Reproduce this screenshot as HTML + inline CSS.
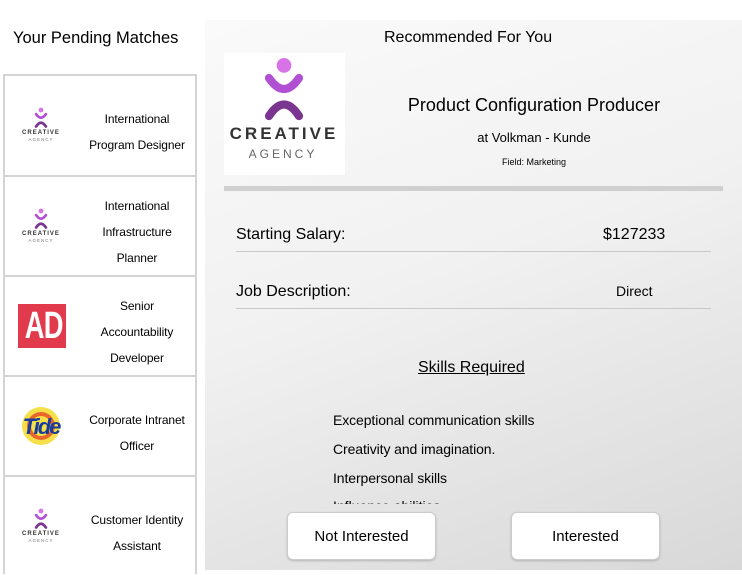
<!DOCTYPE html>
<html><head><style>
*{margin:0;padding:0;box-sizing:border-box}
body{width:742px;height:570px;overflow:hidden;background:#fff;font-family:"Liberation Sans",sans-serif;color:#000;position:relative}
.abs{position:absolute}
.h{font-size:16px}
.list{left:3px;top:74px;width:194px;height:500px;border-left:2px solid #d4d4d4;border-right:2px solid #d4d4d4}
.row{position:absolute;left:0;width:190px;height:100px;border-top:2px solid #d4d4d4}
.row .t{position:absolute;left:76px;width:112px;text-align:center;font-size:12px;line-height:26px;letter-spacing:-0.1px}
.panel{left:205px;top:20px;width:537px;height:550px;background:linear-gradient(160deg,#fafafa 0%,#f1f1f1 45%,#d8d8d8 100%)}
.btn{position:absolute;top:512px;width:149px;height:48px;background:#fff;border:1px solid #ccc;border-radius:6px;box-shadow:0 1px 2px rgba(0,0,0,.2);font-size:15px;text-align:center;line-height:48px}
.sk{position:absolute;left:333px;font-size:14px;letter-spacing:-0.1px}
</style></head><body>
<div class="abs h" style="left:13px;top:29px;font-size:16.5px">Your Pending Matches</div>
<div class="abs panel"></div>
<div class="abs h" style="left:384px;top:29px">Recommended For You</div>

<svg width="0" height="0" style="position:absolute"><defs>
<g id="ca">
<circle cx="0" cy="-12" r="3.2" fill="#d873e8"/>
<path d="M-6.5,-6.5 Q0,3 6.5,-6.5" stroke="#b250d4" stroke-width="3.6" fill="none" stroke-linecap="round"/>
<path d="M-6.5,10 Q0,0 6.5,10" stroke="#7a3590" stroke-width="3.6" fill="none" stroke-linecap="round"/>
</g></defs></svg>

<div class="abs list">
 <div class="row" style="top:0">
  <svg class="abs" style="left:15px;top:28px" width="44" height="42"><use href="#ca" transform="translate(21,15) scale(0.75)"/><text x="21" y="30" font-size="6" font-weight="bold" text-anchor="middle" fill="#333" letter-spacing="1" font-family="Liberation Sans">CREATIVE</text><text x="21" y="37" font-size="4.5" text-anchor="middle" fill="#777" letter-spacing="1" font-family="Liberation Sans">AGENCY</text></svg>
  <div class="t" style="top:30px">International<br>Program Designer</div></div>
 <div class="row" style="top:101px">
  <svg class="abs" style="left:15px;top:28px" width="44" height="42"><use href="#ca" transform="translate(21,15) scale(0.75)"/><text x="21" y="30" font-size="6" font-weight="bold" text-anchor="middle" fill="#333" letter-spacing="1" font-family="Liberation Sans">CREATIVE</text><text x="21" y="37" font-size="4.5" text-anchor="middle" fill="#777" letter-spacing="1" font-family="Liberation Sans">AGENCY</text></svg>
  <div class="t" style="top:16px">International<br>Infrastructure<br>Planner</div></div>
 <div class="row" style="top:201px">
  <div class="abs" style="left:13px;top:27px;width:48px;height:44px;background:#e23a4d;overflow:hidden"><div style="color:#fff;font-weight:bold;font-size:38px;line-height:44px;text-align:center;transform:scaleX(0.72);letter-spacing:-1px">AD</div></div>
  <div class="t" style="top:16px">Senior<br>Accountability<br>Developer</div></div>
 <div class="row" style="top:301px">
  <svg class="abs" style="left:15px;top:28px" width="42" height="42"><circle cx="21" cy="21" r="19" fill="#f6e04a"/><circle cx="21" cy="21" r="14" fill="#e8662c"/><circle cx="21" cy="21" r="10" fill="#f6e04a"/><text x="21" y="29" font-size="22" font-weight="bold" font-style="italic" text-anchor="middle" fill="#1a3c9a" font-family="Liberation Sans" letter-spacing="-2">Tide</text></svg>
  <div class="t" style="top:30px">Corporate Intranet<br>Officer</div></div>
 <div class="row" style="top:401px">
  <svg class="abs" style="left:15px;top:28px" width="44" height="42"><use href="#ca" transform="translate(21,15) scale(0.75)"/><text x="21" y="30" font-size="6" font-weight="bold" text-anchor="middle" fill="#333" letter-spacing="1" font-family="Liberation Sans">CREATIVE</text><text x="21" y="37" font-size="4.5" text-anchor="middle" fill="#777" letter-spacing="1" font-family="Liberation Sans">AGENCY</text></svg>
  <div class="t" style="top:30px">Customer Identity<br>Assistant</div></div>
</div>

<div class="abs" style="left:224px;top:53px;width:121px;height:122px;background:#fff"></div>
<svg class="abs" style="left:224px;top:53px" width="121" height="122"><use href="#ca" transform="translate(60,40) scale(2.3)"/><text x="60" y="86" font-size="17" font-weight="bold" text-anchor="middle" fill="#333" letter-spacing="3" font-family="Liberation Sans">CREATIVE</text><text x="59" y="105" font-size="12" text-anchor="middle" fill="#666" letter-spacing="3" font-family="Liberation Sans">AGENCY</text></svg>

<div class="abs" style="left:345px;top:95px;width:378px;text-align:center;font-size:18px">Product Configuration Producer</div>
<div class="abs" style="left:345px;top:130px;width:378px;text-align:center;font-size:13px">at Volkman - Kunde</div>
<div class="abs" style="left:345px;top:157px;width:378px;text-align:center;font-size:9px">Field: Marketing</div>
<div class="abs" style="left:224px;top:186px;width:499px;height:5px;background:#d0d0d0"></div>

<div class="abs" style="left:236px;top:226px;font-size:16px">Starting Salary:</div>
<div class="abs" style="left:603px;top:226px;font-size:16px">$127233</div>
<div class="abs" style="left:236px;top:251px;width:475px;height:1px;background:#c8c8c8"></div>
<div class="abs" style="left:236px;top:283px;font-size:16px">Job Description:</div>
<div class="abs" style="left:616px;top:283px;font-size:14px">Direct</div>
<div class="abs" style="left:236px;top:308px;width:475px;height:1px;background:#c8c8c8"></div>

<div class="abs" style="left:418px;top:359px;font-size:16px;text-decoration:underline">Skills Required</div>
<div class="sk" style="top:412px">Exceptional communication skills</div>
<div class="sk" style="top:441px">Creativity and imagination.</div>
<div class="sk" style="top:470px">Interpersonal skills</div>
<div class="abs" style="left:333px;top:497px;height:7px;overflow:hidden;font-size:14px;line-height:18px">Influence abilities</div>

<div class="btn" style="left:287px">Not Interested</div>
<div class="btn" style="left:511px">Interested</div>
</body></html>
